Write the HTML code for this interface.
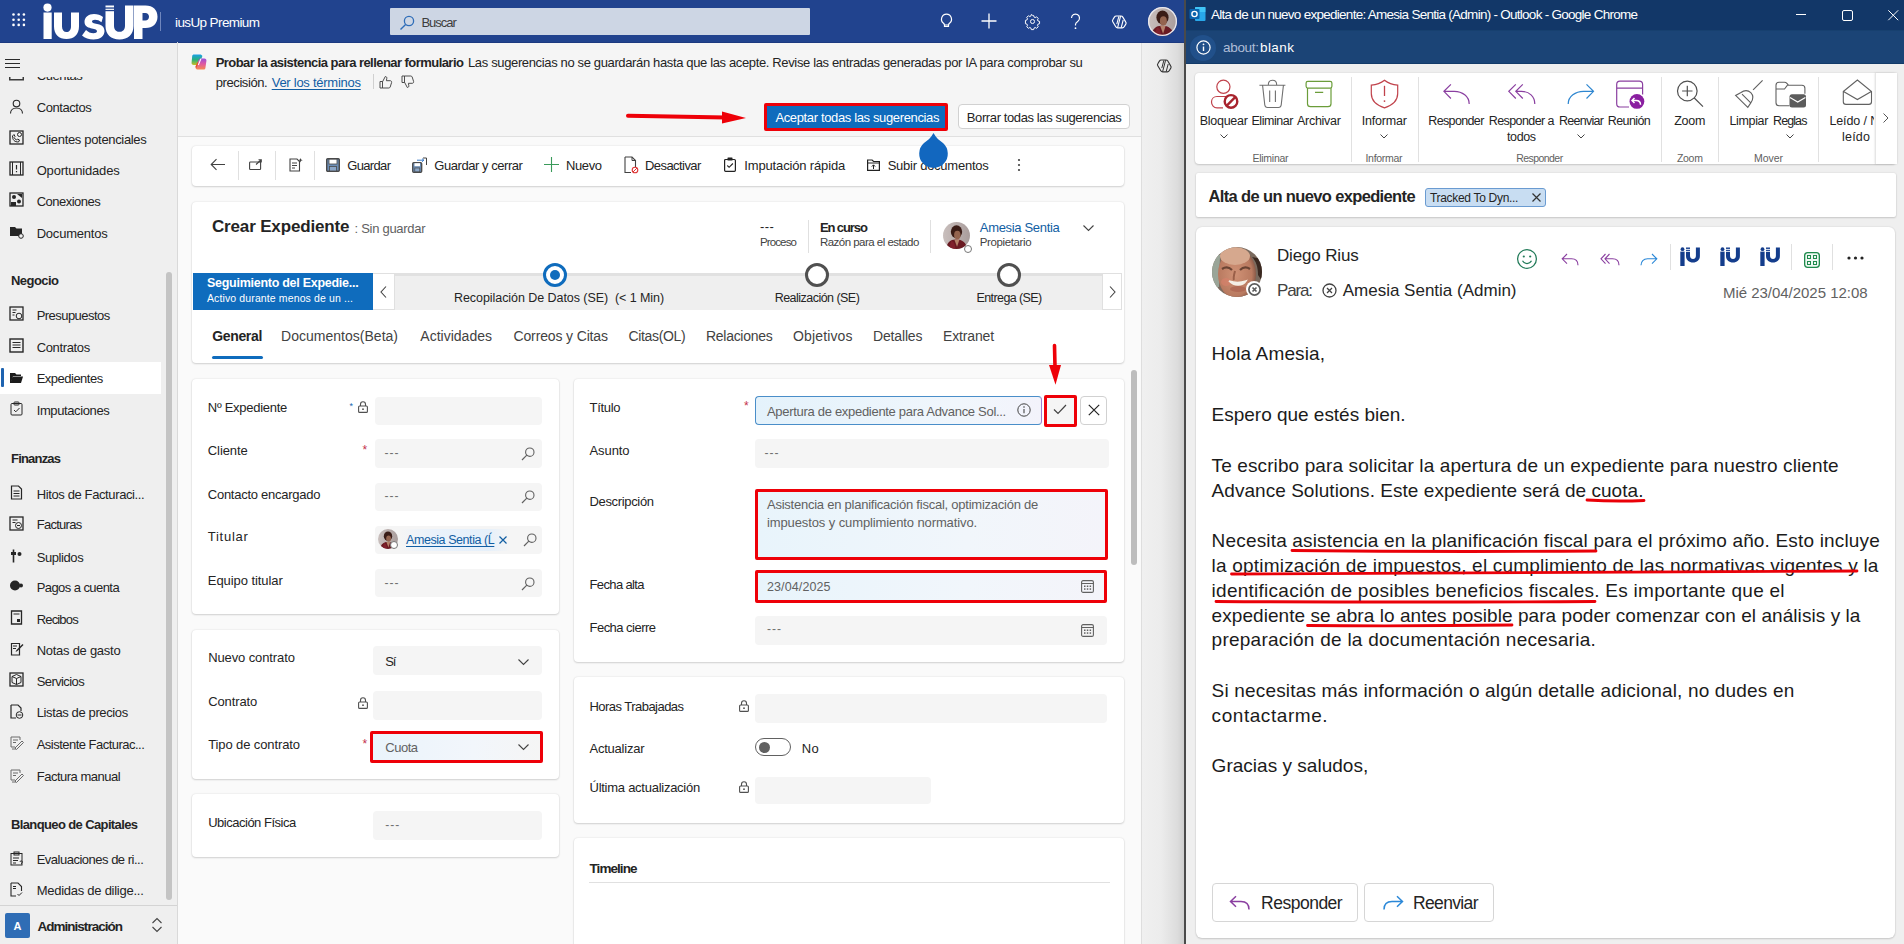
<!DOCTYPE html>
<html><head><meta charset="utf-8">
<style>
*{box-sizing:border-box;margin:0;padding:0}
html,body{width:1904px;height:944px;overflow:hidden;background:#fafafa;font-family:"Liberation Sans",sans-serif;color:#242424;position:relative}
.a{position:absolute}
.t{position:absolute;white-space:nowrap}
svg.a{overflow:visible}
.card{position:absolute;background:#fff;border-radius:4px;box-shadow:0 0 2px rgba(0,0,0,.12),0 1px 2px rgba(0,0,0,.14)}
</style></head><body>
<div class="a" style="left:0px;top:0px;width:1185px;height:43px;background:#21438e;border-bottom:1px solid #1c3a80"></div>
<svg class="a" style="left:12px;top:13px;" width="14" height="14" viewBox="0 0 14 14" fill="none"><circle cx="1.5" cy="1.5" r="1.3" fill="#fff"/><circle cx="1.5" cy="6.7" r="1.3" fill="#fff"/><circle cx="1.5" cy="11.9" r="1.3" fill="#fff"/><circle cx="6.7" cy="1.5" r="1.3" fill="#fff"/><circle cx="6.7" cy="6.7" r="1.3" fill="#fff"/><circle cx="6.7" cy="11.9" r="1.3" fill="#fff"/><circle cx="11.9" cy="1.5" r="1.3" fill="#fff"/><circle cx="11.9" cy="6.7" r="1.3" fill="#fff"/><circle cx="11.9" cy="11.9" r="1.3" fill="#fff"/></svg>
<svg class="a" style="left:42px;top:0px;" width="118" height="42" viewBox="0 0 118 42" fill="none"><g fill="#fff" fill-rule="evenodd">
    <circle cx="5.5" cy="7.6" r="4.1"/>
    <rect x="1.5" y="12.5" width="8.2" height="26.5"/>
    <path d="M12 12.5h8v14c0 3.5 1.8 5.5 4.5 5.5s4.5-2 4.5-5.5v-14h8v14c0 8-5 12.5-12.5 12.5S12 34.5 12 26.5z"/>
    <path d="M61 17c-2.2-2-5.5-3-9-3-5.5 0-9.5 3.2-9.5 7.8 0 8.5 12.5 5.5 12.5 9.5 0 1.3-1.5 2-3.5 2-2.8 0-5.5-1.300-7.5-3.3l-4 5.5c2.8 2.6 7 4 11.5 4 6.5 0 11-3.3 11-8.5 0-9-12.5-6-12.5-9.5 0-1.1 1.2-1.8 3-1.8 2.3 0 4.5.8 6.5 2.5z"/>
    <path d="M63.5 5.5h8.5v20c0 4 2 6.3 5.5 6.3s5.5-2.3 5.5-6.3v-20h8.5v20.5c0 8.5-5.5 13.5-14 13.5s-14-5-14-13.5z"/>
    <path d="M92 5.5h11.5c7.5 0 12 4.5 12 11.2s-4.5 11.3-12 11.3h-3v11h-8.5zM100.5 13v7.5h2.8c2.2 0 3.7-1.5 3.7-3.75S105.5 13 103.3 13z"/>
    </g>
    <g fill="#21438e"><rect x="63" y="7.4" width="9.5" height="1.3"/><rect x="63" y="9.9" width="9.5" height="1.3"/></g></svg>
<div class="a" style="left:160px;top:12px;width:1px;height:19px;background:#6f86bd"></div>
<div class="t" style="left:175.0px;top:16.1px;font-size:13.5px;line-height:13.5px;letter-spacing:-0.61px;color:#fff;">iusUp Premium</div>
<div class="a" style="left:390px;top:8px;width:420px;height:27px;background:#cdd6e4;border-radius:1px"></div>
<svg class="a" style="left:399px;top:15px;" width="16" height="16" viewBox="0 0 16 16" fill="none"><circle cx="10" cy="6" r="4.6" stroke="#2e6db8" stroke-width="1.3"/><path d="M6.6 9.4L1.5 14.5" stroke="#2e6db8" stroke-width="1.4"/></svg>
<div class="t" style="left:421.4px;top:16.2px;font-size:13px;line-height:13px;letter-spacing:-1.01px;color:#3d3d3d;">Buscar</div>
<svg class="a" style="left:939px;top:13px;" width="15" height="16" viewBox="0 0 15 16" fill="none"><path d="M7.5 1.2a5 5 0 0 0-3 9c.6.5 1 1.2 1 2v1.3h4v-1.3c0-.8.4-1.5 1-2a5 5 0 0 0-3-9z" stroke="#fff" stroke-width="1.2"/><path d="M5.6 12h3.8" stroke="#fff" stroke-width="1.1"/></svg>
<svg class="a" style="left:981px;top:13px;" width="16" height="16" viewBox="0 0 16 16" fill="none"><path d="M8 .5v15M.5 8h15" stroke="#fff" stroke-width="1.3"/></svg>
<svg class="a" style="left:1025px;top:13.5px;" width="15" height="15" viewBox="0 0 17 17" fill="none"><path d="M8.5 1.5l1.3.2.5 1.8 1.2.6 1.7-.9 1.8 1.8-.9 1.7.6 1.2 1.8.5v2.6l-1.8.5-.6 1.2.9 1.7-1.8 1.8-1.7-.9-1.2.6-.5 1.8H7.2l-.5-1.8-1.2-.6-1.7.9-1.8-1.8.9-1.7-.6-1.2-1.8-.5V7.2l1.8-.5.6-1.2-.9-1.7 1.8-1.8 1.7.9 1.2-.6.5-1.8z" stroke="#fff" stroke-width="1.1"/><circle cx="8.5" cy="8.5" r="2.3" stroke="#fff" stroke-width="1.1"/></svg>
<svg class="a" style="left:1069px;top:13px;" width="13" height="17" viewBox="0 0 13 17" fill="none"><path d="M2.5 5a4 4 0 1 1 6.2 3.4C7.5 9.2 6.5 10 6.5 11.5v1" stroke="#fff" stroke-width="1.2"/><circle cx="6.5" cy="15.2" r=".9" fill="#fff"/></svg>
<svg class="a" style="left:1112px;top:14.5px;" width="14.5" height="14" viewBox="0 0 14.5 14" fill="none"><path d="M4.3 1h4.6c.8 0 1.5.4 1.9 1.1l3 5c.4.6.4 1.4 0 2l-1.6 2.7c-.4.7-1.1 1.1-1.9 1.1H5.7c-.8 0-1.5-.4-1.9-1.1l-3-5c-.4-.6-.4-1.4 0-2L2.4 2.1C2.8 1.4 3.5 1 4.3 1z" stroke="#fff" stroke-width="1.15"/><path d="M8.6 1.2L5.6 12.7M6.9 1.3l-2.1 7.8M9.2 12.6l2-7.6" stroke="#fff" stroke-width="1.1"/></svg>
<svg class="a" style="left:1148px;top:7px" width="29" height="29" viewBox="0 0 100 100"><defs><clipPath id="ac1"><circle cx="50" cy="50" r="50"/></clipPath><linearGradient id="ag1" x1="0" y1="0" x2="1" y2="0"><stop offset="0" stop-color="#c9bfbd"/><stop offset="1" stop-color="#a99d9c"/></linearGradient></defs>
    <g clip-path="url(#ac1)"><rect width="100" height="100" fill="url(#ag1)"/>
    <ellipse cx="50" cy="36" rx="21" ry="24" fill="#3a1c16"/>
    <ellipse cx="53" cy="48" rx="12" ry="16" fill="#94644f"/>
    <path d="M12 100C14 74 30 64 48 65C68 64 86 74 90 100z" fill="#6a1a22"/>
    <path d="M42 65L52 92 61 65z" fill="#b5826a"/>
    <path d="M30 72C38 70 44 80 46 100H22z" fill="#8a2430" opacity=".7"/></g><circle cx="50" cy="50" r="47.758620689655174" stroke="#e8e8f0" stroke-width="4.482758620689655" fill="none"/></svg>
<div class="a" style="left:1184px;top:0px;width:2px;height:43px;background:#4a4a4a"></div>
<div class="a" style="left:0px;top:43px;width:177px;height:901px;background:#efefef"></div>
<div class="a" style="left:177px;top:42px;width:1px;height:902px;background:#d9d9d9"></div>
<div class="a" style="left:5px;top:59px;width:15px;height:1.3px;background:#2b2b2b"></div>
<div class="a" style="left:5px;top:63px;width:15px;height:1.3px;background:#2b2b2b"></div>
<div class="a" style="left:5px;top:67px;width:15px;height:1.3px;background:#2b2b2b"></div>
<div class="a" style="left:0;top:76.5px;width:177px;height:12px;overflow:hidden"><svg class="a" style="left:9px;top:-11px;" width="15" height="15" viewBox="0 0 15 15" fill="none"><rect x=".75" y=".75" width="13.5" height="13" stroke="#3b3b3b" stroke-width="1.5"/><path d="M8 10h5" stroke="#3b3b3b" stroke-width="1.5"/></svg>
<div class="t" style="left:36.7px;top:-7.5px;font-size:13px;line-height:13px;letter-spacing:-0.40px;">Cuentas</div>
</div>
<div class="a" style="left:0px;top:362px;width:161px;height:32px;background:#fff"></div>
<div class="a" style="left:1px;top:368px;width:3px;height:19px;background:#1e63b0;border-radius:1px"></div>
<svg class="a" style="left:9px;top:99px;" width="15" height="15" viewBox="0 0 15 15" fill="none"><circle cx="7.5" cy="4.5" r="3.3" stroke="#262626" stroke-width="1.1"/><path d="M1.5 14.5c0-3.5 2.7-5.5 6-5.5s6 2 6 5.5" stroke="#262626" stroke-width="1.1"/></svg>
<div class="t" style="left:36.7px;top:101.4px;font-size:13px;line-height:13px;letter-spacing:-0.44px;">Contactos</div>
<svg class="a" style="left:9px;top:130px;" width="15" height="15" viewBox="0 0 15 15" fill="none"><rect x="1" y="1" width="13" height="13" stroke="#262626" stroke-width="1.3"/><path d="M3.5 6c0 4 2 6 6 6l1-2-2-1-1 1c-1-.5-2-1.5-2.5-2.5l1-1-1-2z" stroke="#262626" stroke-width="1"/><circle cx="10.5" cy="4.5" r="2" stroke="#262626"/></svg>
<div class="t" style="left:36.7px;top:132.6px;font-size:13px;line-height:13px;letter-spacing:-0.33px;">Clientes potenciales</div>
<svg class="a" style="left:9px;top:161px;" width="15" height="15" viewBox="0 0 15 15" fill="none"><rect x="1" y="1" width="13" height="13" stroke="#262626" stroke-width="1.3"/><path d="M3.5 1v13M11.5 1v13" stroke="#262626"/><path d="M7.5 4v4.5M7.5 10v1.2" stroke="#262626" stroke-width="1.2"/></svg>
<div class="t" style="left:36.7px;top:163.7px;font-size:13px;line-height:13px;letter-spacing:-0.19px;">Oportunidades</div>
<svg class="a" style="left:9px;top:192px;" width="15" height="15" viewBox="0 0 15 15" fill="none"><rect x="1" y="1" width="13" height="13" stroke="#262626" stroke-width="1.3"/><circle cx="5" cy="5" r="2" fill="#262626"/><circle cx="10" cy="9.5" r="2" fill="#262626"/><path d="M2 10h5v4H2zM8 2h5v4" fill="#262626"/></svg>
<div class="t" style="left:36.7px;top:195.0px;font-size:13px;line-height:13px;letter-spacing:-0.52px;">Conexiones</div>
<svg class="a" style="left:9px;top:224px;" width="15" height="15" viewBox="0 0 15 15" fill="none"><path d="M1 3h5l1.5 1.5H13V12H1z" fill="#262626"/><circle cx="12" cy="12" r="2.3" fill="#efefef" stroke="#262626"/></svg>
<div class="t" style="left:36.7px;top:227.0px;font-size:13px;line-height:13px;letter-spacing:-0.22px;">Documentos</div>
<svg class="a" style="left:9px;top:306px;" width="15" height="15" viewBox="0 0 15 15" fill="none"><rect x="1" y="1" width="13" height="13" stroke="#262626" stroke-width="1.3"/><path d="M3.5 4h4M3.5 6.5h3M3.5 9h2" stroke="#262626"/><circle cx="10" cy="10" r="2.8" stroke="#262626"/></svg>
<div class="t" style="left:36.7px;top:309.0px;font-size:13px;line-height:13px;letter-spacing:-0.55px;">Presupuestos</div>
<svg class="a" style="left:9px;top:338px;" width="15" height="15" viewBox="0 0 15 15" fill="none"><rect x="1" y="1" width="13" height="13" stroke="#262626" stroke-width="1.4"/><path d="M3.5 4.5h8M3.5 7h8M3.5 9.5h8" stroke="#262626"/></svg>
<div class="t" style="left:36.7px;top:340.7px;font-size:13px;line-height:13px;letter-spacing:-0.36px;">Contratos</div>
<svg class="a" style="left:9px;top:370px;" width="15" height="15" viewBox="0 0 15 15" fill="none"><path d="M1 3h5l1.5 1.5H12V6H4L2 13H1z" fill="#1b1b1b"/><path d="M3.5 6.5H14L12 13H1.5z" fill="#1b1b1b"/></svg>
<div class="t" style="left:36.7px;top:372.0px;font-size:13px;line-height:13px;letter-spacing:-0.51px;">Expedientes</div>
<svg class="a" style="left:9px;top:401px;" width="15" height="15" viewBox="0 0 15 15" fill="none"><rect x="2" y="2.5" width="11" height="11.5" rx="1" stroke="#262626"/><rect x="5" y="1" width="5" height="3" rx=".8" stroke="#262626"/><path d="M5 9l1.8 1.8L10.5 7" stroke="#262626"/></svg>
<div class="t" style="left:36.7px;top:403.8px;font-size:13px;line-height:13px;letter-spacing:-0.39px;">Imputaciones</div>
<svg class="a" style="left:9px;top:485px;" width="15" height="15" viewBox="0 0 15 15" fill="none"><path d="M2.5 1h7l3 3v10h-10z" stroke="#262626" stroke-width="1.2"/><path d="M4.5 6h6M4.5 8.5h6M4.5 11h6" stroke="#262626"/></svg>
<div class="t" style="left:36.7px;top:487.5px;font-size:13px;line-height:13px;letter-spacing:-0.38px;">Hitos de Facturaci...</div>
<svg class="a" style="left:9px;top:516px;" width="15" height="15" viewBox="0 0 15 15" fill="none"><rect x="1" y="1" width="13" height="13" stroke="#262626" stroke-width="1.3"/><path d="M3.5 4h5M3.5 6.5h3" stroke="#262626"/><circle cx="9.5" cy="9.5" r="3" stroke="#262626"/><path d="M8 9.5h3" stroke="#262626"/></svg>
<div class="t" style="left:36.7px;top:518.0px;font-size:13px;line-height:13px;letter-spacing:-0.72px;">Facturas</div>
<svg class="a" style="left:9px;top:548px;" width="15" height="15" viewBox="0 0 15 15" fill="none"><path d="M4.5 1.5v13" stroke="#262626" stroke-width="1.6"/><path d="M2 4h5v3H2z" fill="#262626"/><circle cx="10.5" cy="6" r="2" fill="#262626"/></svg>
<div class="t" style="left:36.7px;top:550.5px;font-size:13px;line-height:13px;letter-spacing:-0.41px;">Suplidos</div>
<svg class="a" style="left:9px;top:578px;" width="15" height="15" viewBox="0 0 15 15" fill="none"><circle cx="6" cy="7.5" r="5" fill="#262626"/><circle cx="12" cy="7.5" r="2" fill="#262626"/></svg>
<div class="t" style="left:36.7px;top:581.0px;font-size:13px;line-height:13px;letter-spacing:-0.57px;">Pagos a cuenta</div>
<svg class="a" style="left:9px;top:610px;" width="15" height="15" viewBox="0 0 15 15" fill="none"><path d="M2.5 1h10v13h-10z" stroke="#262626" stroke-width="1.3"/><path d="M4.5 4h6" stroke="#262626"/><rect x="8" y="9" width="3" height="3" fill="#262626"/></svg>
<div class="t" style="left:36.7px;top:612.7px;font-size:13px;line-height:13px;letter-spacing:-0.83px;">Recibos</div>
<svg class="a" style="left:9px;top:641px;" width="15" height="15" viewBox="0 0 15 15" fill="none"><path d="M2.5 2.5h8v11.5h-8z" stroke="#262626" stroke-width="1.2"/><path d="M4 5h4M4 7.5h3" stroke="#262626"/><path d="M13.5 3l-6 6-1 2 2-1 6-6z" fill="#262626"/></svg>
<div class="t" style="left:36.7px;top:643.7px;font-size:13px;line-height:13px;letter-spacing:-0.27px;">Notas de gasto</div>
<svg class="a" style="left:9px;top:672px;" width="15" height="15" viewBox="0 0 15 15" fill="none"><rect x="1" y="1" width="13" height="13" stroke="#262626" stroke-width="1.3"/><path d="M3 4.5L7.5 2.5 12 4.5v6L7.5 12.5 3 10.5zM3 4.5l4.5 2 4.5-2M7.5 6.5v6" stroke="#262626"/></svg>
<div class="t" style="left:36.7px;top:674.7px;font-size:13px;line-height:13px;letter-spacing:-0.59px;">Servicios</div>
<svg class="a" style="left:9px;top:704px;" width="15" height="15" viewBox="0 0 15 15" fill="none"><path d="M2 1h7l3 3v3M2 1v13h5" stroke="#262626" stroke-width="1.2"/><circle cx="10.5" cy="11" r="3.3" stroke="#262626"/><path d="M8.5 11h4" stroke="#262626"/></svg>
<div class="t" style="left:36.7px;top:706.4px;font-size:13px;line-height:13px;letter-spacing:-0.38px;">Listas de precios</div>
<svg class="a" style="left:9px;top:735px;" width="15" height="15" viewBox="0 0 15 15" fill="none"><path d="M2 2h9v3M2 2v10h4" stroke="#6b6b6b"/><path d="M4 5h5M4 7.5h3" stroke="#6b6b6b"/><path d="M6 13l7-7 1.5 1.5-7 7z" stroke="#6b6b6b"/><path d="M3 14h4" stroke="#6b6b6b"/></svg>
<div class="t" style="left:36.7px;top:737.8px;font-size:13px;line-height:13px;letter-spacing:-0.52px;">Asistente Facturac...</div>
<svg class="a" style="left:9px;top:768px;" width="15" height="15" viewBox="0 0 15 15" fill="none"><path d="M2 2h9v3M2 2v10h4" stroke="#6b6b6b"/><path d="M4 5h5M4 7.5h3" stroke="#6b6b6b"/><path d="M6 13l7-7 1.5 1.5-7 7z" stroke="#6b6b6b"/><path d="M3 14h4" stroke="#6b6b6b"/></svg>
<div class="t" style="left:36.7px;top:770.0px;font-size:13px;line-height:13px;letter-spacing:-0.49px;">Factura manual</div>
<svg class="a" style="left:9px;top:851px;" width="15" height="15" viewBox="0 0 15 15" fill="none"><rect x="2" y="2.5" width="11" height="11.5" stroke="#262626"/><rect x="5" y="1" width="5" height="3" stroke="#262626"/><path d="M4 7h6M4 9.5h5M4 12h3" stroke="#262626"/><path d="M11 11a1.2 1.2 0 1 1 1.5 1.2v.8" stroke="#262626" stroke-width=".9"/></svg>
<div class="t" style="left:36.7px;top:853.4px;font-size:13px;line-height:13px;letter-spacing:-0.50px;">Evaluaciones de ri...</div>
<svg class="a" style="left:9px;top:882px;" width="15" height="15" viewBox="0 0 15 15" fill="none"><path d="M2 1h7l3.5 3.5V9M2 1v13h5" stroke="#262626" stroke-width="1.1"/><path d="M4 4.5h3M4 6.5h3" stroke="#262626"/><path d="M8.5 12l1.5 1.5 3-3" stroke="#262626"/></svg>
<div class="t" style="left:36.7px;top:884.4px;font-size:13px;line-height:13px;letter-spacing:-0.26px;">Medidas de dilige...</div>
<div class="t" style="left:11.0px;top:273.5px;font-size:13px;line-height:13px;letter-spacing:-0.55px;font-weight:bold;">Negocio</div>
<div class="t" style="left:11.0px;top:451.6px;font-size:13px;line-height:13px;letter-spacing:-0.80px;font-weight:bold;">Finanzas</div>
<div class="t" style="left:11.0px;top:817.7px;font-size:13px;line-height:13px;letter-spacing:-0.62px;font-weight:bold;">Blanqueo de Capitales</div>
<div class="a" style="left:166px;top:272px;width:6px;height:628px;background:#c4c4c4;border-radius:3px"></div>
<div class="a" style="left:0px;top:905px;width:177px;height:1px;background:#d4d4d4"></div>
<div class="a" style="left:5px;top:913px;width:25px;height:25px;background:#2f6db5;border-radius:2px"></div>
<div class="t" style="left:13.5px;top:920.7px;font-size:11px;line-height:11px;font-weight:bold;color:#fff;">A</div>
<div class="t" style="left:37.4px;top:919.5px;font-size:13.5px;line-height:13.5px;letter-spacing:-0.97px;font-weight:bold;color:#242424;">Administración</div>
<svg class="a" style="left:151px;top:917px;" width="12" height="16" viewBox="0 0 12 16" fill="none"><path d="M1.5 6L6 1.5 10.5 6M1.5 10L6 14.5 10.5 10" stroke="#444" stroke-width="1.1"/></svg>
<div class="a" style="left:178px;top:43px;width:964px;height:93px;background:#f5f5f5"></div>
<div class="a" style="left:178px;top:136px;width:964px;height:1px;background:#e0e0e0"></div>
<div class="a" style="left:178px;top:137px;width:964px;height:807px;background:#fafafa"></div>
<div class="a" style="left:1142px;top:43px;width:42px;height:901px;background:linear-gradient(90deg,#f0f0f0 0%,#ececec 45%,#dcdcdc 85%,#cdcdcd 100%)"></div>
<div class="a" style="left:1141px;top:43px;width:1px;height:901px;background:#dedede"></div>
<svg class="a" style="left:1157px;top:58.5px;" width="14.5" height="14" viewBox="0 0 14.5 14" fill="none"><path d="M4.3 1h4.6c.8 0 1.5.4 1.9 1.1l3 5c.4.6.4 1.4 0 2l-1.6 2.7c-.4.7-1.1 1.1-1.9 1.1H5.7c-.8 0-1.5-.4-1.9-1.1l-3-5c-.4-.6-.4-1.4 0-2L2.4 2.1C2.8 1.4 3.5 1 4.3 1z" stroke="#333" stroke-width="1.1"/><path d="M8.6 1.2L5.6 12.7M6.9 1.3l-2.1 7.8M9.2 12.6l2-7.6" stroke="#333" stroke-width="1"/></svg>
<svg class="a" style="left:191px;top:53.7px;" width="16" height="16" viewBox="0 0 16 16" fill="none"><defs><linearGradient id="cgl" x1="0" y1="0" x2="0" y2="1"><stop offset="0" stop-color="#1aa0e8"/><stop offset=".5" stop-color="#2ab07a"/><stop offset="1" stop-color="#c8c020"/></linearGradient><linearGradient id="cgr" x1="0" y1="0" x2="0" y2="1"><stop offset="0" stop-color="#9a50d8"/><stop offset=".5" stop-color="#e05aa0"/><stop offset="1" stop-color="#f58a50"/></linearGradient></defs><path d="M3 .5h6c1.2 0 2 .6 2.4 1.6L8.5 9.5c-.4 1-1.2 1.6-2.3 1.6H2.6C1.2 11.1.3 10 .6 8.6L1.2 2C1.4 1 2 .5 3 .5z" fill="url(#cgl)"/><path d="M10 4.5h3.4c1.4 0 2.3 1.1 2 2.5l-1 7c-.2 1-.8 1.5-1.8 1.5H7c-1.2 0-2-.6-2.4-1.6L7.6 6.1c.4-1 1.2-1.6 2.4-1.6z" fill="url(#cgr)"/><path d="M4.8 13.5L7 8.5" stroke="#e8562a" stroke-width="1.5"/><path d="M10 4.6L7.3 11" stroke="#fff" stroke-width="1.1"/></svg>
<div class="t" style="left:215.7px;top:55.7px;font-size:13px;line-height:13px;letter-spacing:-0.55px;font-weight:bold;color:#242424;">Probar la asistencia para rellenar formulario</div>
<div class="t" style="left:468.0px;top:55.7px;font-size:13px;line-height:13px;letter-spacing:-0.36px;color:#242424;">Las sugerencias no se guardarán hasta que las acepte. Revise las entradas generadas por IA para comprobar su</div>
<div class="t" style="left:215.7px;top:75.5px;font-size:13px;line-height:13px;letter-spacing:-0.40px;color:#242424;">precisión.</div>
<div class="t" style="left:271.7px;top:75.5px;font-size:13px;line-height:13px;letter-spacing:-0.26px;color:#115ea3;text-decoration:underline;text-underline-offset:2px">Ver los términos</div>
<div class="a" style="left:373px;top:74px;width:1px;height:15px;background:#d0d0d0"></div>
<svg class="a" style="left:379px;top:75px;" width="13" height="14" viewBox="0 0 13 14" fill="none"><path d="M1 6.5h2.5v6.5H1zM3.5 6.8l2.8-5.3c1 0 1.7.8 1.5 1.8L7.4 5.7h3.8c1 0 1.7.9 1.4 1.8l-1.4 4.5c-.2.6-.8 1-1.4 1H3.5" stroke="#444" stroke-width=".95"/></svg>
<svg class="a" style="left:401px;top:75px;" width="13" height="14" viewBox="0 0 13 14" fill="none"><path d="M1 1h2.5v6.5H1zM3.5 7.2l2.8 5.3c1 0 1.7-.8 1.5-1.8L7.4 8.3h3.8c1 0 1.7-.9 1.4-1.8L11.2 2c-.2-.6-.8-1-1.4-1H3.5" stroke="#444" stroke-width=".95"/></svg>
<div class="a" style="left:764px;top:103px;width:184px;height:28px;background:#0f6cbd;border:3px solid #ee0008;border-radius:2px"></div>
<div class="t" style="left:775.4px;top:110.5px;font-size:13px;line-height:13px;letter-spacing:-0.36px;color:#fff;">Aceptar todas las sugerencias</div>
<div class="a" style="left:958px;top:104px;width:172px;height:25px;background:#fff;border:1px solid #d1d1d1;border-radius:4px"></div>
<div class="t" style="left:966.8px;top:110.5px;font-size:13px;line-height:13px;letter-spacing:-0.39px;color:#242424;">Borrar todas las sugerencias</div>
<svg class="a" style="left:626px;top:109px;" width="122" height="16" viewBox="0 0 122 16" fill="none"><path d="M2 6.8L100 8.6" stroke="#ee0008" stroke-width="4" stroke-linecap="round"/><path d="M96 2.5L120 9 96 14.5z" fill="#ee0008"/></svg>
<div class="card" style="left:192px;top:146px;width:932px;height:40px"></div>
<svg class="a" style="left:210px;top:158px;" width="16" height="13" viewBox="0 0 16 13" fill="none"><path d="M15 6.5H1.5M6.5 1.2L1.2 6.5l5.3 5.3" stroke="#424242" stroke-width="1.1"/></svg>
<div class="a" style="left:237.5px;top:151px;width:1px;height:29px;background:#e0e0e0"></div>
<div class="a" style="left:275.4px;top:151px;width:1px;height:29px;background:#e0e0e0"></div>
<div class="a" style="left:314.4px;top:151px;width:1px;height:29px;background:#e0e0e0"></div>
<svg class="a" style="left:249px;top:159px;" width="13" height="11" viewBox="0 0 13 11" fill="none"><rect x=".6" y="3" width="11" height="7.5" rx=".8" stroke="#424242" stroke-width="1.1"/><path d="M7 5.5L12 1M9.5 .8h2.8v2.8" stroke="#424242" stroke-width="1.1"/></svg>
<svg class="a" style="left:289px;top:157px;" width="14" height="15" viewBox="0 0 14 15" fill="none"><path d="M1 2h7l2.5 2.5V14H1z" stroke="#424242" stroke-width="1.1"/><path d="M3 6h5M3 8.5h5M3 11h3" stroke="#424242"/><path d="M11.5 1l.6 1.6 1.6.6-1.6.6-.6 1.6-.6-1.6-1.6-.6 1.6-.6z" fill="#424242"/></svg>
<svg class="a" style="left:326px;top:158px;" width="14" height="14" viewBox="0 0 14 14" fill="none"><rect x=".7" y=".7" width="12.6" height="12.6" rx="1" fill="#6b8db5" stroke="#4a4a4a" stroke-width="1.4"/><rect x="3" y="1.2" width="8" height="4.8" fill="#fff" stroke="#4a4a4a" stroke-width=".8"/><rect x="3.5" y="8.5" width="7" height="4.5" fill="#8aa6c8" stroke="#4a4a4a" stroke-width=".8"/></svg>
<div class="t" style="left:347.3px;top:158.5px;font-size:13px;line-height:13px;letter-spacing:-0.67px;">Guardar</div>
<svg class="a" style="left:412px;top:157px;" width="15" height="16" viewBox="0 0 15 16" fill="none"><rect x=".7" y="5.7" width="9" height="9.6" rx="1" fill="#6b8db5" stroke="#4a4a4a" stroke-width="1.3"/><rect x="2.5" y="6.2" width="5.5" height="3" fill="#fff"/><rect x="2.8" y="11" width="5" height="3.8" fill="#8aa6c8" stroke="#4a4a4a" stroke-width=".7"/><path d="M11 1h3.5v7" stroke="#424242" stroke-width="1"/><path d="M5 3.2h7M10 1.6l1.8 1.6L10 4.8" stroke="#3a7bc8" stroke-width="1"/></svg>
<div class="t" style="left:434.3px;top:158.5px;font-size:13px;line-height:13px;letter-spacing:-0.45px;">Guardar y cerrar</div>
<svg class="a" style="left:544px;top:157px;" width="15" height="15" viewBox="0 0 15 15" fill="none"><path d="M7.5 0v15M0 7.5h15" stroke="#3a9a5a" stroke-width="1.1"/></svg>
<div class="t" style="left:566.0px;top:158.5px;font-size:13px;line-height:13px;letter-spacing:-0.40px;">Nuevo</div>
<svg class="a" style="left:624px;top:156px;" width="15" height="18" viewBox="0 0 15 18" fill="none"><path d="M1 1h7l3.5 3.5V11M1 1v15.5h6" stroke="#424242" stroke-width="1.1"/><path d="M8 1v3.5h3.5" stroke="#424242"/><circle cx="11" cy="14" r="2.8" stroke="#d33" stroke-width="1.1"/><path d="M9 16l4-4" stroke="#d33"/></svg>
<div class="t" style="left:645.0px;top:158.5px;font-size:13px;line-height:13px;letter-spacing:-0.56px;">Desactivar</div>
<svg class="a" style="left:724px;top:157px;" width="12" height="15" viewBox="0 0 12 15" fill="none"><rect x=".6" y="2.5" width="10.8" height="11.8" rx="1" stroke="#222" stroke-width="1.2"/><rect x="3.5" y=".6" width="5" height="3" rx=".5" fill="#222"/><path d="M3.3 8.5l1.8 1.8 3.8-3.8" stroke="#222" stroke-width="1.1"/></svg>
<div class="t" style="left:744.3px;top:158.5px;font-size:13px;line-height:13px;letter-spacing:-0.15px;">Imputación rápida</div>
<svg class="a" style="left:867px;top:159px;" width="13" height="12" viewBox="0 0 13 12" fill="none"><path d="M.6 1h4.5l1.5 1.5h5.8v8.8H.6z" stroke="#222" stroke-width="1.2"/><path d="M.6 4h11.8" stroke="#222"/><path d="M6.5 10V6M4.8 7.6L6.5 5.8l1.7 1.8" stroke="#222"/></svg>
<div class="t" style="left:887.7px;top:158.5px;font-size:13px;line-height:13px;letter-spacing:-0.25px;">Subir documentos</div>
<svg class="a" style="left:1017px;top:158px;" width="4" height="14" viewBox="0 0 4 14" fill="none"><circle cx="2" cy="2" r="1.1" fill="#424242"/><circle cx="2" cy="7" r="1.1" fill="#424242"/><circle cx="2" cy="12" r="1.1" fill="#424242"/></svg>
<svg class="a" style="left:918px;top:132px;" width="31" height="36" viewBox="0 0 31 36" fill="none"><path d="M15.5 1C13 6 9.5 8.5 6 11A14.3 14.3 0 1 0 25 11C21.5 8.5 18 6 15.5 1z" fill="#1267bf"/></svg>
<div class="card" style="left:192px;top:202px;width:932px;height:161px"></div>
<div class="t" style="left:212.0px;top:218.1px;font-size:17px;line-height:17px;letter-spacing:-0.16px;font-weight:bold;color:#242424;">Crear Expediente</div>
<div class="t" style="left:354.6px;top:222.0px;font-size:13px;line-height:13px;letter-spacing:-0.29px;color:#616161;">: Sin guardar</div>
<div class="t" style="left:759.9px;top:220.0px;font-size:13px;line-height:13px;letter-spacing:0.50px;color:#242424;">---</div>
<div class="t" style="left:759.9px;top:237.3px;font-size:11.5px;line-height:11.5px;letter-spacing:-0.86px;color:#424242;">Proceso</div>
<div class="a" style="left:808px;top:220px;width:1px;height:33px;background:#e0e0e0"></div>
<div class="t" style="left:819.9px;top:220.6px;font-size:13px;line-height:13px;letter-spacing:-1.09px;font-weight:bold;color:#242424;">En curso</div>
<div class="t" style="left:819.9px;top:237.3px;font-size:11.5px;line-height:11.5px;letter-spacing:-0.52px;color:#424242;">Razón para el estado</div>
<div class="a" style="left:930px;top:220px;width:1px;height:33px;background:#e0e0e0"></div>
<svg class="a" style="left:942.7px;top:222px" width="27" height="27" viewBox="0 0 100 100"><defs><clipPath id="ac2"><circle cx="50" cy="50" r="50"/></clipPath><linearGradient id="ag2" x1="0" y1="0" x2="1" y2="0"><stop offset="0" stop-color="#c9bfbd"/><stop offset="1" stop-color="#a99d9c"/></linearGradient></defs>
    <g clip-path="url(#ac2)"><rect width="100" height="100" fill="url(#ag2)"/>
    <ellipse cx="50" cy="36" rx="21" ry="24" fill="#3a1c16"/>
    <ellipse cx="53" cy="48" rx="12" ry="16" fill="#94644f"/>
    <path d="M12 100C14 74 30 64 48 65C68 64 86 74 90 100z" fill="#6a1a22"/>
    <path d="M42 65L52 92 61 65z" fill="#b5826a"/>
    <path d="M30 72C38 70 44 80 46 100H22z" fill="#8a2430" opacity=".7"/></g></svg>
<div class="a" style="left:963.5px;top:244.5px;width:8px;height:8px;background:#fff;border:1px solid #777;border-radius:50%"></div>
<div class="t" style="left:979.8px;top:220.6px;font-size:13px;line-height:13px;letter-spacing:-0.32px;color:#115ea3;">Amesia Sentia</div>
<div class="t" style="left:979.8px;top:237.3px;font-size:11.5px;line-height:11.5px;letter-spacing:-0.38px;color:#424242;">Propietario</div>
<svg class="a" style="left:1083px;top:224.5px;" width="11" height="6" viewBox="0 0 11 6" fill="none"><path d="M.5 .5L5.5 5.5 10.5 .5" stroke="#424242" stroke-width="1.1"/></svg>
<div class="a" style="left:193px;top:273px;width:180px;height:37px;background:#0f6cbd"></div>
<div class="t" style="left:207.0px;top:277.4px;font-size:12.5px;line-height:12.5px;letter-spacing:-0.27px;font-weight:bold;color:#fff;">Seguimiento del Expedie...</div>
<div class="t" style="left:207.0px;top:292.7px;font-size:10.5px;line-height:10.5px;letter-spacing:0.12px;color:#fff;">Activo durante menos de un ...</div>
<div class="a" style="left:373px;top:273px;width:22px;height:37px;background:#fff;border:1px solid #e0e0e0;border-left:none"></div>
<svg class="a" style="left:380px;top:286px;" width="7" height="12" viewBox="0 0 7 12" fill="none"><path d="M6 .5L1 6l5 5.5" stroke="#424242" stroke-width="1.1"/></svg>
<div class="a" style="left:395px;top:273px;width:707px;height:37px;background:#efefef;border-top:3px solid #e1e1e1"></div>
<div class="a" style="left:1101.8px;top:273px;width:20.5px;height:37px;background:#fff;border:1px solid #e0e0e0"></div>
<svg class="a" style="left:1109px;top:286px;" width="7" height="12" viewBox="0 0 7 12" fill="none"><path d="M1 .5L6 6l-5 5.5" stroke="#424242" stroke-width="1.1"/></svg>
<svg class="a" style="left:542px;top:262px;" width="26" height="26" viewBox="0 0 26 26" fill="none"><circle cx="13" cy="13" r="10.5" fill="#fff" stroke="#0f6cbd" stroke-width="3"/><circle cx="13" cy="13" r="5" fill="#0f6cbd"/></svg>
<svg class="a" style="left:804px;top:262px;" width="26" height="26" viewBox="0 0 26 26" fill="none"><circle cx="13" cy="13" r="10.5" fill="#fff" stroke="#505050" stroke-width="3"/></svg>
<svg class="a" style="left:996px;top:262px;" width="26" height="26" viewBox="0 0 26 26" fill="none"><circle cx="13" cy="13" r="10.5" fill="#fff" stroke="#505050" stroke-width="3"/></svg>
<div class="t" style="left:454.0px;top:291.7px;font-size:12.5px;line-height:12.5px;letter-spacing:-0.06px;color:#242424;white-space:pre">Recopilación De Datos (SE)  (&lt; 1 Min)</div>
<div class="t" style="left:774.7px;top:291.7px;font-size:12.5px;line-height:12.5px;letter-spacing:-0.53px;color:#242424;">Realización (SE)</div>
<div class="t" style="left:976.5px;top:291.7px;font-size:12.5px;line-height:12.5px;letter-spacing:-0.60px;color:#242424;">Entrega (SE)</div>
<div class="t" style="left:212.3px;top:329.3px;font-size:14px;line-height:14px;letter-spacing:-0.36px;font-weight:bold;color:#242424;">General</div>
<div class="t" style="left:281.0px;top:329.3px;font-size:14px;line-height:14px;letter-spacing:0.02px;color:#424242;">Documentos(Beta)</div>
<div class="t" style="left:420.3px;top:329.3px;font-size:14px;line-height:14px;letter-spacing:0.01px;color:#424242;">Actividades</div>
<div class="t" style="left:513.5px;top:329.3px;font-size:14px;line-height:14px;letter-spacing:-0.14px;color:#424242;">Correos y Citas</div>
<div class="t" style="left:628.6px;top:329.3px;font-size:14px;line-height:14px;letter-spacing:-0.36px;color:#424242;">Citas(OL)</div>
<div class="t" style="left:706.0px;top:329.3px;font-size:14px;line-height:14px;letter-spacing:-0.29px;color:#424242;">Relaciones</div>
<div class="t" style="left:793.0px;top:329.3px;font-size:14px;line-height:14px;letter-spacing:0.15px;color:#424242;">Objetivos</div>
<div class="t" style="left:873.0px;top:329.3px;font-size:14px;line-height:14px;letter-spacing:-0.16px;color:#424242;">Detalles</div>
<div class="t" style="left:943.0px;top:329.3px;font-size:14px;line-height:14px;letter-spacing:-0.16px;color:#424242;">Extranet</div>
<div class="a" style="left:212px;top:356px;width:51px;height:3px;background:#0f6cbd;border-radius:2px"></div>
<div class="a" style="left:1130.5px;top:370px;width:6px;height:195px;background:#bdbdbd;border-radius:3px"></div>
<div class="card" style="left:192px;top:379px;width:366.5px;height:235px"></div>
<div class="t" style="left:207.8px;top:401.4px;font-size:13px;line-height:13px;letter-spacing:-0.28px;color:#242424;">Nº Expediente</div>
<div class="t" style="left:349.5px;top:402.4px;font-size:9px;line-height:9px;color:#2266b0;">*</div>
<svg class="a" style="left:358px;top:400.5px;" width="10" height="12" viewBox="0 0 10 12" fill="none"><rect x=".6" y="5" width="8.8" height="6.4" rx="1" stroke="#505050" stroke-width="1.1"/><path d="M2.5 5V3.3a2.5 2.5 0 0 1 5 0V5" stroke="#505050" stroke-width="1.1"/><circle cx="5" cy="8.2" r=".9" fill="#505050"/></svg>
<div class="a" style="left:374.7px;top:396.5px;width:166.90000000000003px;height:28.30000000000001px;background:#f5f5f5;border-radius:4px"></div>
<div class="t" style="left:207.8px;top:444.3px;font-size:13px;line-height:13px;letter-spacing:-0.08px;color:#242424;">Cliente</div>
<div class="t" style="left:362.5px;top:443.8px;font-size:12px;line-height:12px;color:#c4314b;">*</div>
<div class="a" style="left:374.7px;top:439.4px;width:166.90000000000003px;height:28.600000000000023px;background:#f5f5f5;border-radius:4px"></div>
<div class="t" style="left:384.5px;top:447.3px;font-size:12px;line-height:12px;letter-spacing:1.01px;color:#707070;">---</div>
<svg class="a" style="left:521px;top:446.5px;" width="14" height="14" viewBox="0 0 14 14" fill="none"><circle cx="8.8" cy="5.2" r="4.2" stroke="#616161" stroke-width="1.1"/><path d="M5.8 8.2L1 13" stroke="#616161" stroke-width="1.2"/></svg>
<div class="t" style="left:207.8px;top:487.5px;font-size:13px;line-height:13px;letter-spacing:-0.26px;color:#242424;">Contacto encargado</div>
<div class="a" style="left:374.7px;top:482.6px;width:166.90000000000003px;height:28.399999999999977px;background:#f5f5f5;border-radius:4px"></div>
<div class="t" style="left:384.5px;top:490.3px;font-size:12px;line-height:12px;letter-spacing:1.01px;color:#707070;">---</div>
<svg class="a" style="left:521px;top:489.5px;" width="14" height="14" viewBox="0 0 14 14" fill="none"><circle cx="8.8" cy="5.2" r="4.2" stroke="#616161" stroke-width="1.1"/><path d="M5.8 8.2L1 13" stroke="#616161" stroke-width="1.2"/></svg>
<div class="t" style="left:207.8px;top:529.9px;font-size:13px;line-height:13px;letter-spacing:0.73px;color:#242424;">Titular</div>
<div class="a" style="left:374.7px;top:526.3px;width:166.90000000000003px;height:27.700000000000045px;background:#f5f5f5;border-radius:4px"></div>
<div class="a" style="left:400px;top:529px;width:110px;height:22px;background:linear-gradient(90deg,#f5f5f5,#eaf2fb 30%,#e6f0fa 80%,#f5f5f5)"></div>
<svg class="a" style="left:378px;top:529px" width="20" height="20" viewBox="0 0 100 100"><defs><clipPath id="ac3"><circle cx="50" cy="50" r="50"/></clipPath><linearGradient id="ag3" x1="0" y1="0" x2="1" y2="0"><stop offset="0" stop-color="#c9bfbd"/><stop offset="1" stop-color="#a99d9c"/></linearGradient></defs>
    <g clip-path="url(#ac3)"><rect width="100" height="100" fill="url(#ag3)"/>
    <ellipse cx="50" cy="36" rx="21" ry="24" fill="#3a1c16"/>
    <ellipse cx="53" cy="48" rx="12" ry="16" fill="#94644f"/>
    <path d="M12 100C14 74 30 64 48 65C68 64 86 74 90 100z" fill="#6a1a22"/>
    <path d="M42 65L52 92 61 65z" fill="#b5826a"/>
    <path d="M30 72C38 70 44 80 46 100H22z" fill="#8a2430" opacity=".7"/></g></svg>
<div class="a" style="left:389.5px;top:541px;width:8px;height:8px;background:#fff;border:1px solid #777;border-radius:50%"></div>
<div class="t" style="left:406.0px;top:534.2px;font-size:12.5px;line-height:12.5px;letter-spacing:-0.43px;color:#115ea3;text-decoration:underline;text-underline-offset:2px">Amesia Sentia (Ĺ</div>
<svg class="a" style="left:499px;top:536px;" width="8" height="8" viewBox="0 0 8 8" fill="none"><path d="M.5 .5l7 7M7.5 .5l-7 7" stroke="#115ea3" stroke-width="1.2"/></svg>
<svg class="a" style="left:523px;top:533px;" width="14" height="14" viewBox="0 0 14 14" fill="none"><circle cx="8.8" cy="5.2" r="4.2" stroke="#616161" stroke-width="1.1"/><path d="M5.8 8.2L1 13" stroke="#616161" stroke-width="1.2"/></svg>
<div class="t" style="left:207.8px;top:574.0px;font-size:13px;line-height:13px;letter-spacing:-0.07px;color:#242424;">Equipo titular</div>
<div class="a" style="left:374.7px;top:569.2px;width:166.90000000000003px;height:28.09999999999991px;background:#f5f5f5;border-radius:4px"></div>
<div class="t" style="left:384.5px;top:576.8px;font-size:12px;line-height:12px;letter-spacing:1.01px;color:#707070;">---</div>
<svg class="a" style="left:521px;top:576.5px;" width="14" height="14" viewBox="0 0 14 14" fill="none"><circle cx="8.8" cy="5.2" r="4.2" stroke="#616161" stroke-width="1.1"/><path d="M5.8 8.2L1 13" stroke="#616161" stroke-width="1.2"/></svg>
<div class="card" style="left:192px;top:629.5px;width:366.5px;height:149px"></div>
<div class="t" style="left:208.2px;top:650.9px;font-size:13px;line-height:13px;letter-spacing:-0.11px;color:#242424;">Nuevo contrato</div>
<div class="a" style="left:373px;top:646.4px;width:168.5px;height:28.600000000000023px;background:#f5f5f5;border-radius:4px"></div>
<div class="t" style="left:385.3px;top:655.4px;font-size:13px;line-height:13px;letter-spacing:-1.28px;color:#242424;">Sí</div>
<svg class="a" style="left:517.5px;top:658.5px;" width="11" height="6" viewBox="0 0 11 6" fill="none"><path d="M.5 .5L5.5 5.5 10.5 .5" stroke="#424242" stroke-width="1.1"/></svg>
<div class="t" style="left:208.2px;top:694.8px;font-size:13px;line-height:13px;letter-spacing:-0.12px;color:#242424;">Contrato</div>
<svg class="a" style="left:357.5px;top:696.5px;" width="10" height="12" viewBox="0 0 10 12" fill="none"><rect x=".6" y="5" width="8.8" height="6.4" rx="1" stroke="#505050" stroke-width="1.1"/><path d="M2.5 5V3.3a2.5 2.5 0 0 1 5 0V5" stroke="#505050" stroke-width="1.1"/><circle cx="5" cy="8.2" r=".9" fill="#505050"/></svg>
<div class="a" style="left:373px;top:691px;width:168.5px;height:28.600000000000023px;background:#f5f5f5;border-radius:4px"></div>
<div class="t" style="left:208.2px;top:737.8px;font-size:13px;line-height:13px;letter-spacing:-0.11px;color:#242424;">Tipo de contrato</div>
<div class="t" style="left:362.5px;top:737.8px;font-size:12px;line-height:12px;color:#c4314b;">*</div>
<div class="a" style="left:373px;top:733.5px;width:167px;height:27px;background:linear-gradient(90deg,#eaf4fb,#f2f6fb 60%,#f5f5f5)"></div>
<div class="a" style="left:369.5px;top:730.6px;width:173.79999999999995px;height:32.89999999999998px;border:3px solid #ee0008;border-radius:2px"></div>
<div class="t" style="left:385.3px;top:741.2px;font-size:13px;line-height:13px;letter-spacing:-0.50px;color:#616161;">Cuota</div>
<svg class="a" style="left:517.5px;top:744px;" width="11" height="6" viewBox="0 0 11 6" fill="none"><path d="M.5 .5L5.5 5.5 10.5 .5" stroke="#424242" stroke-width="1.1"/></svg>
<div class="card" style="left:192px;top:794px;width:366.5px;height:63px"></div>
<div class="t" style="left:208.2px;top:816.0px;font-size:13px;line-height:13px;letter-spacing:-0.49px;color:#242424;">Ubicación Física</div>
<div class="a" style="left:373px;top:811.2px;width:168.5px;height:28.5px;background:#f5f5f5;border-radius:4px"></div>
<div class="t" style="left:385.3px;top:819.3px;font-size:12px;line-height:12px;letter-spacing:1.01px;color:#707070;">---</div>
<div class="card" style="left:574px;top:379px;width:550px;height:282.5px"></div>
<div class="t" style="left:589.5px;top:400.7px;font-size:13px;line-height:13px;letter-spacing:-0.30px;color:#242424;">Título</div>
<div class="t" style="left:744.0px;top:399.8px;font-size:12px;line-height:12px;color:#c4314b;">*</div>
<div class="a" style="left:755px;top:396px;width:287px;height:28.7px;background:linear-gradient(90deg,#e4f2fb,#f0f6fc 70%,#f3f3fb);border:1px solid #4a8ec9;border-right-color:#9a7fd0;border-radius:4px"></div>
<div class="t" style="left:767.0px;top:404.6px;font-size:13px;line-height:13px;letter-spacing:-0.30px;color:#616161;">Apertura de expediente para Advance Sol...</div>
<svg class="a" style="left:1016.5px;top:403px;" width="14" height="14" viewBox="0 0 14 14" fill="none"><circle cx="7" cy="7" r="6.2" stroke="#424242" stroke-width="1"/><path d="M7 6v4.3" stroke="#424242" stroke-width="1.1"/><circle cx="7" cy="4" r=".8" fill="#424242"/></svg>
<div class="a" style="left:1046px;top:398px;width:29px;height:27px;background:#f5f5f5"></div>
<div class="a" style="left:1043.8px;top:395.4px;width:33.200000000000045px;height:31.600000000000023px;border:3px solid #ee0008;border-radius:2px"></div>
<svg class="a" style="left:1053px;top:404px;" width="14" height="11" viewBox="0 0 14 11" fill="none"><path d="M1 5.5l4 4L13 1" stroke="#424242" stroke-width="1.2"/></svg>
<div class="a" style="left:1079.6px;top:396px;width:27.7px;height:28.7px;background:#fff;border:1px solid #d1d1d1;border-radius:4px"></div>
<svg class="a" style="left:1087.5px;top:404px;" width="12" height="12" viewBox="0 0 12 12" fill="none"><path d="M.8 .8l10.4 10.4M11.2 .8L.8 11.2" stroke="#242424" stroke-width="1.2"/></svg>
<div class="t" style="left:589.5px;top:444.3px;font-size:13px;line-height:13px;letter-spacing:-0.09px;color:#242424;">Asunto</div>
<div class="a" style="left:755px;top:439px;width:354px;height:28.69999999999999px;background:#f5f5f5;border-radius:4px"></div>
<div class="t" style="left:764.4px;top:447.3px;font-size:12px;line-height:12px;letter-spacing:1.01px;color:#707070;">---</div>
<div class="t" style="left:589.5px;top:495.0px;font-size:13px;line-height:13px;letter-spacing:-0.34px;color:#242424;">Descripción</div>
<div class="a" style="left:757px;top:491px;width:349px;height:66px;background:linear-gradient(90deg,#e8f4fb,#f1f6fb 60%,#f4f4fa)"></div>
<div class="a" style="left:754.6px;top:488.9px;width:353.4px;height:70.89999999999998px;border:3px solid #ee0008;border-radius:2px"></div>
<div class="t" style="left:767.0px;top:498.4px;font-size:13px;line-height:13px;letter-spacing:-0.24px;color:#616161;">Asistencia en planificación fiscal, optimización de</div>
<div class="t" style="left:767.0px;top:516.0px;font-size:13px;line-height:13px;letter-spacing:-0.11px;color:#616161;">impuestos y cumplimiento normativo.</div>
<div class="t" style="left:589.5px;top:577.8px;font-size:13px;line-height:13px;letter-spacing:-0.63px;color:#242424;">Fecha alta</div>
<div class="a" style="left:757px;top:572px;width:348px;height:29px;background:linear-gradient(90deg,#e8f4fb,#f1f6fb 60%,#f4f4fa)"></div>
<div class="a" style="left:754.6px;top:569.6px;width:352.69999999999993px;height:33.39999999999998px;border:3px solid #ee0008;border-radius:2px"></div>
<div class="t" style="left:767.0px;top:581.4px;font-size:12.5px;line-height:12.5px;letter-spacing:0.11px;color:#616161;">23/04/2025</div>
<svg class="a" style="left:1081.2px;top:580px;" width="13" height="13" viewBox="0 0 13 13" fill="none"><rect x=".6" y=".6" width="11.8" height="11.8" rx="1.5" stroke="#616161" stroke-width="1.1"/><path d="M.6 3.5h11.8" stroke="#616161"/><g fill="#616161"><rect x="3" y="5.5" width="1.5" height="1.5"/><rect x="5.8" y="5.5" width="1.5" height="1.5"/><rect x="8.6" y="5.5" width="1.5" height="1.5"/><rect x="3" y="8.3" width="1.5" height="1.5"/><rect x="5.8" y="8.3" width="1.5" height="1.5"/><rect x="8.6" y="8.3" width="1.5" height="1.5"/></g></svg>
<div class="t" style="left:589.5px;top:621.0px;font-size:13px;line-height:13px;letter-spacing:-0.52px;color:#242424;">Fecha cierre</div>
<div class="a" style="left:755px;top:615.8px;width:352.29999999999995px;height:29.300000000000068px;background:#f5f5f5;border-radius:4px"></div>
<div class="t" style="left:767.0px;top:623.3px;font-size:12px;line-height:12px;letter-spacing:1.01px;color:#707070;">---</div>
<svg class="a" style="left:1081.2px;top:624px;" width="13" height="13" viewBox="0 0 13 13" fill="none"><rect x=".6" y=".6" width="11.8" height="11.8" rx="1.5" stroke="#616161" stroke-width="1.1"/><path d="M.6 3.5h11.8" stroke="#616161"/><g fill="#616161"><rect x="3" y="5.5" width="1.5" height="1.5"/><rect x="5.8" y="5.5" width="1.5" height="1.5"/><rect x="8.6" y="5.5" width="1.5" height="1.5"/><rect x="3" y="8.3" width="1.5" height="1.5"/><rect x="5.8" y="8.3" width="1.5" height="1.5"/><rect x="8.6" y="8.3" width="1.5" height="1.5"/></g></svg>
<svg class="a" style="left:1046px;top:343px;" width="18" height="44" viewBox="0 0 18 44" fill="none"><path d="M8.5 2.5L9 24" stroke="#ee0008" stroke-width="3.6" stroke-linecap="round"/><path d="M3 22h12l-5.5 19.8z" fill="#ee0008"/></svg>
<div class="card" style="left:574px;top:677px;width:550px;height:145.8px"></div>
<div class="t" style="left:589.5px;top:699.5px;font-size:13px;line-height:13px;letter-spacing:-0.54px;color:#242424;">Horas Trabajadas</div>
<svg class="a" style="left:739px;top:699.5px;" width="10" height="12" viewBox="0 0 10 12" fill="none"><rect x=".6" y="5" width="8.8" height="6.4" rx="1" stroke="#505050" stroke-width="1.1"/><path d="M2.5 5V3.3a2.5 2.5 0 0 1 5 0V5" stroke="#505050" stroke-width="1.1"/><circle cx="5" cy="8.2" r=".9" fill="#505050"/></svg>
<div class="a" style="left:755px;top:694.2px;width:352.29999999999995px;height:28.59999999999991px;background:#f5f5f5;border-radius:4px"></div>
<div class="t" style="left:589.5px;top:741.8px;font-size:13px;line-height:13px;letter-spacing:-0.23px;color:#242424;">Actualizar</div>
<div class="a" style="left:755px;top:738px;width:36px;height:18px;background:#fff;border:1px solid #616161;border-radius:9px"></div>
<div class="a" style="left:758.5px;top:741.5px;width:11px;height:11px;background:#616161;border-radius:50%"></div>
<div class="t" style="left:801.8px;top:741.5px;font-size:13px;line-height:13px;letter-spacing:0.38px;color:#242424;">No</div>
<div class="t" style="left:589.5px;top:780.9px;font-size:13px;line-height:13px;letter-spacing:-0.26px;color:#242424;">Última actualización</div>
<svg class="a" style="left:739px;top:781px;" width="10" height="12" viewBox="0 0 10 12" fill="none"><rect x=".6" y="5" width="8.8" height="6.4" rx="1" stroke="#505050" stroke-width="1.1"/><path d="M2.5 5V3.3a2.5 2.5 0 0 1 5 0V5" stroke="#505050" stroke-width="1.1"/><circle cx="5" cy="8.2" r=".9" fill="#505050"/></svg>
<div class="a" style="left:755px;top:777.2px;width:176.39999999999998px;height:27.09999999999991px;background:#f5f5f5;border-radius:4px"></div>
<div class="card" style="left:574px;top:837.5px;width:550px;height:130px"></div>
<div class="t" style="left:589.5px;top:861.9px;font-size:13.5px;line-height:13.5px;letter-spacing:-0.93px;font-weight:bold;color:#242424;">Timeline</div>
<div class="a" style="left:589px;top:882px;width:521px;height:1px;background:#e0e0e0"></div>
<div class="a" style="left:1184px;top:0px;width:2px;height:944px;background:#4a4a4a"></div>
<div class="a" style="left:1186px;top:0px;width:718px;height:944px;background:#efefef"></div>
<div class="a" style="left:1186px;top:0px;width:718px;height:30px;background:#123768"></div>
<svg class="a" style="left:1189px;top:6px;" width="17" height="16" viewBox="0 0 17 16" fill="none"><rect x="6" y="1" width="10.5" height="14" rx="1" fill="#28a8ea"/><rect x="6" y="1" width="10.5" height="5" fill="#50d9ff" opacity=".6"/><rect x=".5" y="3" width="10" height="10" rx="1" fill="#0a64ad"/><circle cx="5.5" cy="8" r="2.6" stroke="#fff" stroke-width="1.4"/></svg>
<div class="t" style="left:1211.0px;top:7.6px;font-size:13.5px;line-height:13.5px;letter-spacing:-0.73px;color:#fff;">Alta de un nuevo expediente: Amesia Sentia (Admin) - Outlook - Google Chrome</div>
<div class="a" style="left:1796px;top:14px;width:10px;height:1px;background:#fff"></div>
<div class="a" style="left:1842px;top:10px;width:10.5px;height:10.5px;border:1px solid #fff;border-radius:2px"></div>
<svg class="a" style="left:1888px;top:10px;" width="10.5" height="10.5" viewBox="0 0 10.5 10.5" fill="none"><path d="M.3 .3l9.9 9.9M10.2 .3L.3 10.2" stroke="#fff" stroke-width="1"/></svg>
<div class="a" style="left:1186px;top:30px;width:718px;height:34px;background:#1b4476;border-top:1px solid #17406f;border-bottom:1px solid #123a68"></div>
<div class="a" style="left:1190px;top:34.5px;width:26px;height:26px;background:#21508a;border-radius:50%"></div>
<svg class="a" style="left:1195.5px;top:39.5px;" width="15" height="15" viewBox="0 0 15 15" fill="none"><circle cx="7.5" cy="7.5" r="6.6" stroke="#fff" stroke-width="1.2"/><path d="M7.5 6.5v4.5" stroke="#fff" stroke-width="1.4"/><circle cx="7.5" cy="4.3" r=".9" fill="#fff"/></svg>
<div class="t" style="left:1223.0px;top:41.1px;font-size:13.5px;line-height:13.5px;letter-spacing:-0.31px;color:#aebdd6;">about:</div>
<div class="t" style="left:1260.0px;top:41.1px;font-size:13.5px;line-height:13.5px;letter-spacing:0.43px;color:#fff;">blank</div>
<div class="card" style="left:1195px;top:73px;width:701px;height:91px;border-radius:4px"></div>
<div class="a" style="left:1874.5px;top:73px;width:22.5px;height:91px;background:#fff;border-left:1px solid #e6e6e6;box-shadow:0 0 2px rgba(0,0,0,.15)"></div>
<svg class="a" style="left:1883px;top:113px;" width="6" height="10" viewBox="0 0 6 10" fill="none"><path d="M.5 .5L5 5 .5 9.5" stroke="#555" stroke-width="1"/></svg>
<div class="a" style="left:1351px;top:77px;width:1px;height:85px;background:#e1e1e1"></div>
<div class="a" style="left:1417.6px;top:77px;width:1px;height:85px;background:#e1e1e1"></div>
<div class="a" style="left:1661px;top:77px;width:1px;height:85px;background:#e1e1e1"></div>
<div class="a" style="left:1718px;top:77px;width:1px;height:85px;background:#e1e1e1"></div>
<div class="a" style="left:1818px;top:77px;width:1px;height:85px;background:#e1e1e1"></div>
<div class="t" style="left:1199.8px;top:114.9px;font-size:12.5px;line-height:12.5px;letter-spacing:-0.29px;color:#242424;">Bloquear</div>
<div class="t" style="left:1251.5px;top:114.9px;font-size:12.5px;line-height:12.5px;letter-spacing:-0.48px;color:#242424;">Eliminar</div>
<div class="t" style="left:1297.0px;top:114.9px;font-size:12.5px;line-height:12.5px;letter-spacing:-0.29px;color:#242424;">Archivar</div>
<div class="t" style="left:1361.7px;top:114.9px;font-size:12.5px;line-height:12.5px;letter-spacing:-0.18px;color:#242424;">Informar</div>
<div class="t" style="left:1428.3px;top:114.9px;font-size:12.5px;line-height:12.5px;letter-spacing:-0.64px;color:#242424;">Responder</div>
<div class="t" style="left:1488.7px;top:114.9px;font-size:12.5px;line-height:12.5px;letter-spacing:-0.58px;color:#242424;">Responder a</div>
<div class="t" style="left:1559.0px;top:114.9px;font-size:12.5px;line-height:12.5px;letter-spacing:-0.72px;color:#242424;">Reenviar</div>
<div class="t" style="left:1607.8px;top:114.9px;font-size:12.5px;line-height:12.5px;letter-spacing:-0.59px;color:#242424;">Reunión</div>
<div class="t" style="left:1674.3px;top:114.9px;font-size:12.5px;line-height:12.5px;letter-spacing:-0.32px;color:#242424;">Zoom</div>
<div class="t" style="left:1729.4px;top:114.9px;font-size:12.5px;line-height:12.5px;letter-spacing:-0.33px;color:#242424;">Limpiar</div>
<div class="t" style="left:1773.0px;top:114.9px;font-size:12.5px;line-height:12.5px;letter-spacing:-0.90px;color:#242424;">Reglas</div>
<div class="a" style="left:1829px;top:110px;width:45px;height:40px;overflow:hidden"><div class="t" style="left:0.4px;top:4.9px;font-size:12.5px;line-height:12.5px;letter-spacing:-0.09px;color:#242424;">Leído / N</div>
<div class="t" style="left:13.0px;top:20.9px;font-size:12.5px;line-height:12.5px;letter-spacing:0.22px;color:#242424;">leído</div>
</div>
<div class="t" style="left:1507.0px;top:130.9px;font-size:12.5px;line-height:12.5px;letter-spacing:-0.39px;color:#242424;">todos</div>
<svg class="a" style="left:1219.7px;top:134px;" width="8" height="5" viewBox="0 0 8 5" fill="none"><path d="M.5 .5L4 4 7.5 .5" stroke="#444" stroke-width="1"/></svg>
<svg class="a" style="left:1380px;top:134px;" width="8" height="5" viewBox="0 0 8 5" fill="none"><path d="M.5 .5L4 4 7.5 .5" stroke="#444" stroke-width="1"/></svg>
<svg class="a" style="left:1576.5px;top:134px;" width="8" height="5" viewBox="0 0 8 5" fill="none"><path d="M.5 .5L4 4 7.5 .5" stroke="#444" stroke-width="1"/></svg>
<svg class="a" style="left:1785.5px;top:134px;" width="8" height="5" viewBox="0 0 8 5" fill="none"><path d="M.5 .5L4 4 7.5 .5" stroke="#444" stroke-width="1"/></svg>
<div class="t" style="left:1252.5px;top:152.6px;font-size:10.5px;line-height:10.5px;letter-spacing:-0.27px;color:#616161;">Eliminar</div>
<div class="t" style="left:1365.5px;top:152.6px;font-size:10.5px;line-height:10.5px;letter-spacing:-0.30px;color:#616161;">Informar</div>
<div class="t" style="left:1516.2px;top:152.6px;font-size:10.5px;line-height:10.5px;letter-spacing:-0.55px;color:#616161;">Responder</div>
<div class="t" style="left:1676.9px;top:152.6px;font-size:10.5px;line-height:10.5px;letter-spacing:-0.28px;color:#616161;">Zoom</div>
<div class="t" style="left:1754.1px;top:152.6px;font-size:10.5px;line-height:10.5px;letter-spacing:-0.04px;color:#616161;">Mover</div>
<svg class="a" style="left:0;top:0" width="1904" height="944" fill="none">
    <circle cx="1223.4" cy="86.8" r="6.6" stroke="#c0424b" stroke-width="1.2"/>
    <path d="M1226 96.5h-9c-3.2 0-5.5 2.4-5.5 5.6s2.3 5.8 5.5 5.8h6" stroke="#c0424b" stroke-width="1.2"/>
    <circle cx="1231" cy="101.4" r="6.3" stroke="#a8232d" stroke-width="2.4" fill="#fff"/>
    <path d="M1226.8 105.6l8.4-8.4" stroke="#a8232d" stroke-width="2.4"/>
    <path d="M1259.4 85.2h26M1262.6 85.5l2.2 19.5c.2 1.5 1.2 2.5 2.7 2.5h11c1.5 0 2.5-1 2.7-2.5l2.2-19.5M1268.3 85c0-3 1.8-4.7 4.2-4.7s4.2 1.7 4.2 4.7M1269.7 90.5v11.5M1275.4 90.5v11.5" stroke="#6f6f6f" stroke-width="1.1"/>
    <rect x="1306.1" y="81.3" width="25.8" height="6.8" rx="1.8" stroke="#6b9d3a" stroke-width="1.2"/>
    <path d="M1307.5 88.1v15.6c0 1.7 1.3 3 3 3h17.5c1.7 0 3-1.3 3-3V88.1M1315 92.3h8.2" stroke="#6b9d3a" stroke-width="1.2"/>
    <path d="M1384.5 80.3c-3.5 2.8-8.5 4.5-13.2 4.8v8.5c0 6.8 4.5 11.5 13.2 14.3 8.7-2.8 13.2-7.5 13.2-14.3v-8.5c-4.7-.3-9.7-2-13.2-4.8z" stroke="#c0424b" stroke-width="1.2"/>
    <path d="M1384.5 85.8v10.2" stroke="#c0424b" stroke-width="1.3"/><circle cx="1384.5" cy="101.1" r=".9" fill="#c0424b"/>
    <path d="M1450.9 84.3l-7 7 7 7.2M1444.3 91.3h10c8 0 14.9 5.2 14.9 12.6" stroke="#8a3fa0" stroke-width="1.2"/>
    <path d="M1515.8 84.3l-7 7 7 7.2M1522.8 84.3l-7 7 7 7.2M1516.3 91.3h5c8 0 13.5 5.2 13.5 12.6" stroke="#8a3fa0" stroke-width="1.2"/>
    <path d="M1586.5 84.3l7 7-7 7.2M1593.5 91.3h-10c-8 0-15.3 5.2-15.3 12.6" stroke="#2e86d0" stroke-width="1.2"/>
    <path d="M1629 107h-9c-1.8 0-3.3-1.5-3.3-3.3V84.5c0-1.8 1.5-3.3 3.3-3.3h19.3c1.8 0 3.3 1.5 3.3 3.3v10M1616.7 88.1h25.9" stroke="#8a3fa0" stroke-width="1.2"/>
    <circle cx="1636.9" cy="101.4" r="7.4" fill="#8a1fa0"/>
    <path d="M1640.5 104.8c0-2.6-1.6-4.3-4.3-4.3h-3.8M1634.5 98l-2.5 2.5 2.5 2.5" stroke="#fff" stroke-width="1.5"/>
    <circle cx="1687.3" cy="91" r="9.8" stroke="#505050" stroke-width="1.2"/>
    <path d="M1694.3 98l8.7 8.6M1687.3 85.8v10.4M1682.1 91h10.4" stroke="#505050" stroke-width="1.2"/>
    <path d="M1762.6 80.4l-9.5 9.5" stroke="#616161" stroke-width="1.1"/>
    <path d="M1735.6 95.4l12.2 12 3-4.5c2.6-3.6 2.6-7.5 0-10.2-2.7-2.6-6.6-2.6-10.2 0z M1742 94.2l9 9" stroke="#616161" stroke-width="1.1"/>
    <path d="M1789.5 105.7h-10.5c-1.6 0-3-1.4-3-3V85.2c0-1.6 1.4-3 3-3h5.5c1 0 1.8.5 2.4 1.2l1.5 1.8h13.5c1.6 0 3 1.4 3 3v5.5M1776 89h8.5l3-3.8" stroke="#616161" stroke-width="1.1"/>
    <rect x="1789.5" y="94.2" width="16.5" height="13.4" rx="2.5" fill="#5c5c5c"/>
    <path d="M1790 97.5l7.7 4.5 7.7-4.5" stroke="#fff" stroke-width="1.2"/>
    <path d="M1843.3 91.5l14.1-11.5 14.1 11.5v10.2c0 1.5-1.2 2.7-2.7 2.7h-22.8c-1.5 0-2.7-1.2-2.7-2.7z M1843.5 91.5l13.9 8 13.9-8" stroke="#616161" stroke-width="1.1"/>
    </svg>
<div class="card" style="left:1196px;top:173px;width:700px;height:43.5px;border-radius:2px"></div>
<div class="t" style="left:1208.5px;top:187.5px;font-size:16.5px;line-height:16.5px;letter-spacing:-0.64px;font-weight:bold;color:#242424;">Alta de un nuevo expediente</div>
<div class="a" style="left:1425px;top:188px;width:121px;height:19px;background:#c8ddf2;border:1px solid #6a9bd1;border-radius:3px"></div>
<div class="t" style="left:1430.0px;top:192.3px;font-size:12px;line-height:12px;letter-spacing:-0.31px;color:#242424;">Tracked To Dyn...</div>
<svg class="a" style="left:1532px;top:193px;" width="9" height="9" viewBox="0 0 9 9" fill="none"><path d="M.5 .5l8 8M8.5 .5l-8 8" stroke="#333" stroke-width="1.2"/></svg>
<div class="card" style="left:1196px;top:227px;width:699px;height:711px;border-radius:6px"></div>
<svg class="a" style="left:1211.5px;top:247px;" width="50" height="50" viewBox="0 0 50 50" fill="none"><defs><clipPath id="dcl"><circle cx="25" cy="25" r="25"/></clipPath><radialGradient id="dsk" cx=".45" cy=".5" r=".55"><stop offset="0" stop-color="#d09276"/><stop offset=".8" stop-color="#b97a60"/><stop offset="1" stop-color="#8a5a48"/></radialGradient></defs><g clip-path="url(#dcl)">
    <rect width="50" height="50" fill="#7a6a5e"/>
    <path d="M0 8h8l-1 32H0z" fill="#9aa598"/>
    <ellipse cx="25" cy="27" rx="19" ry="25" fill="url(#dsk)"/>
    <path d="M30 0C44 2 50 12 50 25V0z" fill="#3e2c24"/><path d="M40 10c4 4 6 10 6 18l4 6V12z" fill="#3a2820"/>
    <ellipse cx="23" cy="9" rx="15" ry="9" fill="#d6a88e"/>
    <path d="M10 22c3-2 7-2 10 1M28 23c3-3 7-3 10-1" stroke="#6a4434" stroke-width="2.2"/>
    <path d="M23 24c-1 4-2 7-1 9" stroke="#9a5f48" stroke-width="2"/>
    <ellipse cx="14" cy="35" rx="5" ry="4" fill="#d8806a" opacity=".6"/>
    <path d="M17 34c3 3 6 4 9 4s6-1 8-4c-3 1-6 1.5-8.5 1.5S20 35 17 34z" fill="#f4efe6" stroke="#f4efe6" stroke-width="1.5"/>
    <ellipse cx="26" cy="42" rx="8" ry="3" fill="#b06a55"/>
    </g></svg>
<div class="a" style="left:1246px;top:281.3px;width:16px;height:16px;background:#fff;border-radius:50%"></div>
<svg class="a" style="left:1247.5px;top:282.8px;" width="13" height="13" viewBox="0 0 13 13" fill="none"><circle cx="6.5" cy="6.5" r="5.6" stroke="#5c5c5c" stroke-width="1.7" fill="#fff"/><path d="M4.5 4.5l4 4M8.5 4.5l-4 4" stroke="#5c5c5c" stroke-width="1.7"/></svg>
<div class="t" style="left:1277.0px;top:247.4px;font-size:17px;line-height:17px;letter-spacing:-0.16px;color:#242424;">Diego Rius</div>
<div class="t" style="left:1277.0px;top:281.6px;font-size:17px;line-height:17px;letter-spacing:-1.16px;color:#424242;">Para:</div>
<svg class="a" style="left:1322px;top:283px;" width="15" height="15" viewBox="0 0 15 15" fill="none"><circle cx="7.5" cy="7.5" r="6.5" stroke="#424242" stroke-width="1.3"/><path d="M5 5l5 5M10 5l-5 5" stroke="#424242" stroke-width="1.3"/></svg>
<div class="t" style="left:1342.7px;top:281.6px;font-size:17px;line-height:17px;color:#242424;">Amesia Sentia (Admin)</div>
<div class="t" style="left:1723.0px;top:284.5px;font-size:15px;line-height:15px;letter-spacing:-0.03px;color:#616161;">Mié 23/04/2025 12:08</div>
<svg class="a" style="left:1516px;top:247.5px;" width="22" height="22" viewBox="0 0 22 22" fill="none"><circle cx="11" cy="11" r="9.4" stroke="#217a58" stroke-width="1.25"/><circle cx="7.8" cy="8.5" r="1.1" fill="#217a58"/><circle cx="14.2" cy="8.5" r="1.1" fill="#217a58"/><path d="M6.5 12.8c1 1.8 2.5 2.7 4.5 2.7s3.5-.9 4.5-2.7" stroke="#217a58" stroke-width="1.25"/></svg>
<svg class="a" style="left:1561px;top:253px;" width="18" height="14" viewBox="0 0 18 14" fill="none"><path d="M6 1L1.2 5.8 6 10.6M1.5 5.8h9c4 0 6.5 2.5 6.5 6.5" stroke="#8a3fa0" stroke-width="1.1"/></svg>
<svg class="a" style="left:1600px;top:253px;" width="20" height="14" viewBox="0 0 20 14" fill="none"><path d="M5.5 1L1 5.8l4.5 4.8M9.5 1L5 5.8l4.5 4.8M5.5 5.8h7c4 0 6.5 2.5 6.5 6.5" stroke="#8a3fa0" stroke-width="1.1"/></svg>
<svg class="a" style="left:1640px;top:253px;" width="18" height="14" viewBox="0 0 18 14" fill="none"><path d="M12 1l4.8 4.8L12 10.6M16.5 5.8h-9c-4 0-6.5 2.5-6.5 6.5" stroke="#2b88d8" stroke-width="1.1"/></svg>
<div class="a" style="left:1669.5px;top:244px;width:1px;height:26px;background:#e0e0e0"></div>
<svg class="a" style="left:1680px;top:246px;" width="22" height="22" viewBox="0 0 22 22" fill="none"><circle cx="2.5" cy="3.2" r="1.9" fill="#143d8c"/><rect x=".3" y="5.6" width="4.3" height="14.4" fill="#143d8c"/><path d="M6 1.5h4v8c0 2 1 3.5 3 3.5s2.9-1.5 2.9-3.5v-8h4v8.5c0 4-3 6.5-6.9 6.5S6 14 6 10z" fill="#143d8c"/><rect x="5.5" y="2.9" width="5" height=".9" fill="#fff"/><rect x="5.5" y="4.9" width="5" height=".9" fill="#fff"/></svg>
<svg class="a" style="left:1720px;top:246px;" width="22" height="22" viewBox="0 0 22 22" fill="none"><circle cx="2.5" cy="3.2" r="1.9" fill="#143d8c"/><rect x=".3" y="5.6" width="4.3" height="14.4" fill="#143d8c"/><path d="M6 1.5h4v8c0 2 1 3.5 3 3.5s2.9-1.5 2.9-3.5v-8h4v8.5c0 4-3 6.5-6.9 6.5S6 14 6 10z" fill="#143d8c"/><rect x="5.5" y="2.9" width="5" height=".9" fill="#fff"/><rect x="5.5" y="4.9" width="5" height=".9" fill="#fff"/></svg>
<svg class="a" style="left:1760px;top:246px;" width="22" height="22" viewBox="0 0 22 22" fill="none"><circle cx="2.5" cy="3.2" r="1.9" fill="#143d8c"/><rect x=".3" y="5.6" width="4.3" height="14.4" fill="#143d8c"/><path d="M6 1.5h4v8c0 2 1 3.5 3 3.5s2.9-1.5 2.9-3.5v-8h4v8.5c0 4-3 6.5-6.9 6.5S6 14 6 10z" fill="#143d8c"/><rect x="5.5" y="2.9" width="5" height=".9" fill="#fff"/><rect x="5.5" y="4.9" width="5" height=".9" fill="#fff"/></svg>
<div class="a" style="left:1791px;top:244px;width:1px;height:26px;background:#e0e0e0"></div>
<svg class="a" style="left:1804px;top:252px;" width="16" height="16" viewBox="0 0 16 16" fill="none"><rect x=".65" y=".65" width="14.7" height="14.7" rx="3" fill="#eef8f2" stroke="#1f8a4c" stroke-width="1.3"/><g stroke="#1f8a4c" stroke-width="1"><rect x="3.5" y="3.5" width="3" height="3"/><rect x="9.5" y="3.5" width="3" height="3"/><rect x="3.5" y="9.5" width="3" height="3"/><rect x="9.5" y="9.5" width="3" height="3"/></g></svg>
<div class="a" style="left:1832px;top:244px;width:1px;height:26px;background:#e0e0e0"></div>
<svg class="a" style="left:1847px;top:255.5px;" width="17" height="4" viewBox="0 0 17 4" fill="none"><circle cx="2" cy="2" r="1.6" fill="#242424"/><circle cx="8.5" cy="2" r="1.6" fill="#242424"/><circle cx="15" cy="2" r="1.6" fill="#242424"/></svg>
<div class="t" style="left:1211.6px;top:344.2px;font-size:19px;line-height:19px;letter-spacing:0.14px;color:#1b1b1b;">Hola Amesia,</div>
<div class="t" style="left:1211.6px;top:405.3px;font-size:19px;line-height:19px;letter-spacing:-0.02px;color:#1b1b1b;">Espero que estés bien.</div>
<div class="t" style="left:1211.6px;top:456.2px;font-size:19px;line-height:19px;letter-spacing:0.11px;color:#1b1b1b;">Te escribo para solicitar la apertura de un expediente para nuestro cliente</div>
<div class="t" style="left:1211.6px;top:480.9px;font-size:19px;line-height:19px;letter-spacing:0.04px;color:#1b1b1b;">Advance Solutions. Este expediente será de cuota.</div>
<div class="t" style="left:1211.6px;top:531.1px;font-size:19px;line-height:19px;letter-spacing:0.17px;color:#1b1b1b;">Necesita asistencia en la planificación fiscal para el próximo año. Esto incluye</div>
<div class="t" style="left:1211.6px;top:555.9px;font-size:19px;line-height:19px;letter-spacing:0.20px;color:#1b1b1b;">la optimización de impuestos, el cumplimiento de las normativas vigentes y la</div>
<div class="t" style="left:1211.6px;top:580.5px;font-size:19px;line-height:19px;letter-spacing:0.26px;color:#1b1b1b;">identificación de posibles beneficios fiscales. Es importante que el</div>
<div class="t" style="left:1211.6px;top:605.6px;font-size:19px;line-height:19px;letter-spacing:0.06px;color:#1b1b1b;">expediente se abra lo antes posible para poder comenzar con el análisis y la</div>
<div class="t" style="left:1211.6px;top:630.4px;font-size:19px;line-height:19px;letter-spacing:0.25px;color:#1b1b1b;">preparación de la documentación necesaria.</div>
<div class="t" style="left:1211.6px;top:680.9px;font-size:19px;line-height:19px;letter-spacing:0.17px;color:#1b1b1b;">Si necesitas más información o algún detalle adicional, no dudes en</div>
<div class="t" style="left:1211.6px;top:705.7px;font-size:19px;line-height:19px;letter-spacing:0.56px;color:#1b1b1b;">contactarme.</div>
<div class="t" style="left:1211.6px;top:755.9px;font-size:19px;line-height:19px;letter-spacing:0.02px;color:#1b1b1b;">Gracias y saludos,</div>
<svg class="a" style="left:0;top:0" width="1904" height="944"><path d="M1587 500Q1615.5 501.75 1644 500.5" stroke="#ea0008" stroke-width="2.8" stroke-linecap="round" fill="none"/><path d="M1292 550.5Q1444.0 552.25 1596 551" stroke="#ea0008" stroke-width="2.8" stroke-linecap="round" fill="none"/><path d="M1231.5 574Q1544.25 573.5 1857 571" stroke="#ea0008" stroke-width="2.8" stroke-linecap="round" fill="none"/><path d="M1216 601.5Q1405.5 602.5 1595 601.5" stroke="#ea0008" stroke-width="2.8" stroke-linecap="round" fill="none"/><path d="M1307.5 625.5Q1409.75 626.25 1512 625" stroke="#ea0008" stroke-width="2.8" stroke-linecap="round" fill="none"/></svg>
<div class="a" style="left:1212.3px;top:883.4px;width:145.7px;height:38.8px;background:#fff;border:1px solid #d6d6d6;border-radius:4px"></div>
<svg class="a" style="left:1229px;top:895px;" width="22" height="16" viewBox="0 0 22 16" fill="none"><path d="M7 1.2L1.5 6.5 7 11.8M2 6.5h10c5 0 8 3 8 8" stroke="#8a3fa0" stroke-width="1.5"/></svg>
<div class="t" style="left:1261.0px;top:895.2px;font-size:17.5px;line-height:17.5px;letter-spacing:-0.49px;color:#242424;">Responder</div>
<div class="a" style="left:1364.4px;top:883.4px;width:130.1px;height:38.8px;background:#fff;border:1px solid #d6d6d6;border-radius:4px"></div>
<svg class="a" style="left:1382px;top:895px;" width="22" height="16" viewBox="0 0 22 16" fill="none"><path d="M15 1.2l5.5 5.3L15 11.8M20 6.5H10c-5 0-8 3-8 8" stroke="#2b88d8" stroke-width="1.5"/></svg>
<div class="t" style="left:1413.0px;top:895.2px;font-size:17.5px;line-height:17.5px;letter-spacing:-0.65px;color:#242424;">Reenviar</div>
</body></html>
